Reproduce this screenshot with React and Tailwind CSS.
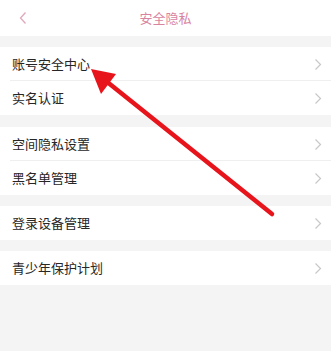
import React from "react";

const Chevron = () => (
  <svg width="8" height="13" viewBox="0 0 8 13" className="shrink-0">
    <path d="M1.5 1.5 L6.5 6.5 L1.5 11.5" fill="none" stroke="#c8c8c8" strokeWidth="1.2" />
  </svg>
);

const Row = ({ label, divider }) => (
  <div className="relative flex h-[34px] items-center justify-between bg-white pl-[12px] pr-[9px]">
    <span className="text-[13px] text-[#262626]">{label}</span>
    <Chevron />
    {divider && <div className="absolute bottom-0 left-[10px] right-0 h-px bg-[#efefef]" />}
  </div>
);

export default function App() {
  return (
    <div
      className="relative h-[351px] w-[331px] overflow-hidden bg-[#f4f4f4]"
      style={{ fontFamily: '"Noto Sans CJK SC", "Noto Sans", sans-serif' }}
    >
      <div className="relative flex h-[36px] items-center justify-center bg-white">
        <svg width="10" height="14" viewBox="0 0 10 14" className="absolute left-[18px] top-[11px]">
          <path d="M7.5 1.5 L2.5 7 L7.5 12.5" fill="none" stroke="#e0a8bc" strokeWidth="1.3" />
        </svg>
        <span className="text-[13px] text-[#d9849f]">安全隐私</span>
      </div>
      <div className="mt-[11px] flex flex-col">
        <Row label="账号安全中心" divider />
        <Row label="实名认证" />
      </div>
      <div className="mt-[12px] flex flex-col">
        <Row label="空间隐私设置" divider />
        <Row label="黑名单管理" />
      </div>
      <div className="mt-[11px] flex flex-col">
        <Row label="登录设备管理" />
      </div>
      <div className="mt-[11px] flex flex-col">
        <Row label="青少年保护计划" />
      </div>
      <svg className="absolute left-0 top-0" width="331" height="351" viewBox="0 0 331 351">
        <line x1="106" y1="81" x2="272" y2="214" stroke="#e8141c" strokeWidth="4.5" strokeLinecap="round" />
        <polygon points="91,69 116,74 101,94" fill="#e8141c" />
      </svg>
    </div>
  );
}
